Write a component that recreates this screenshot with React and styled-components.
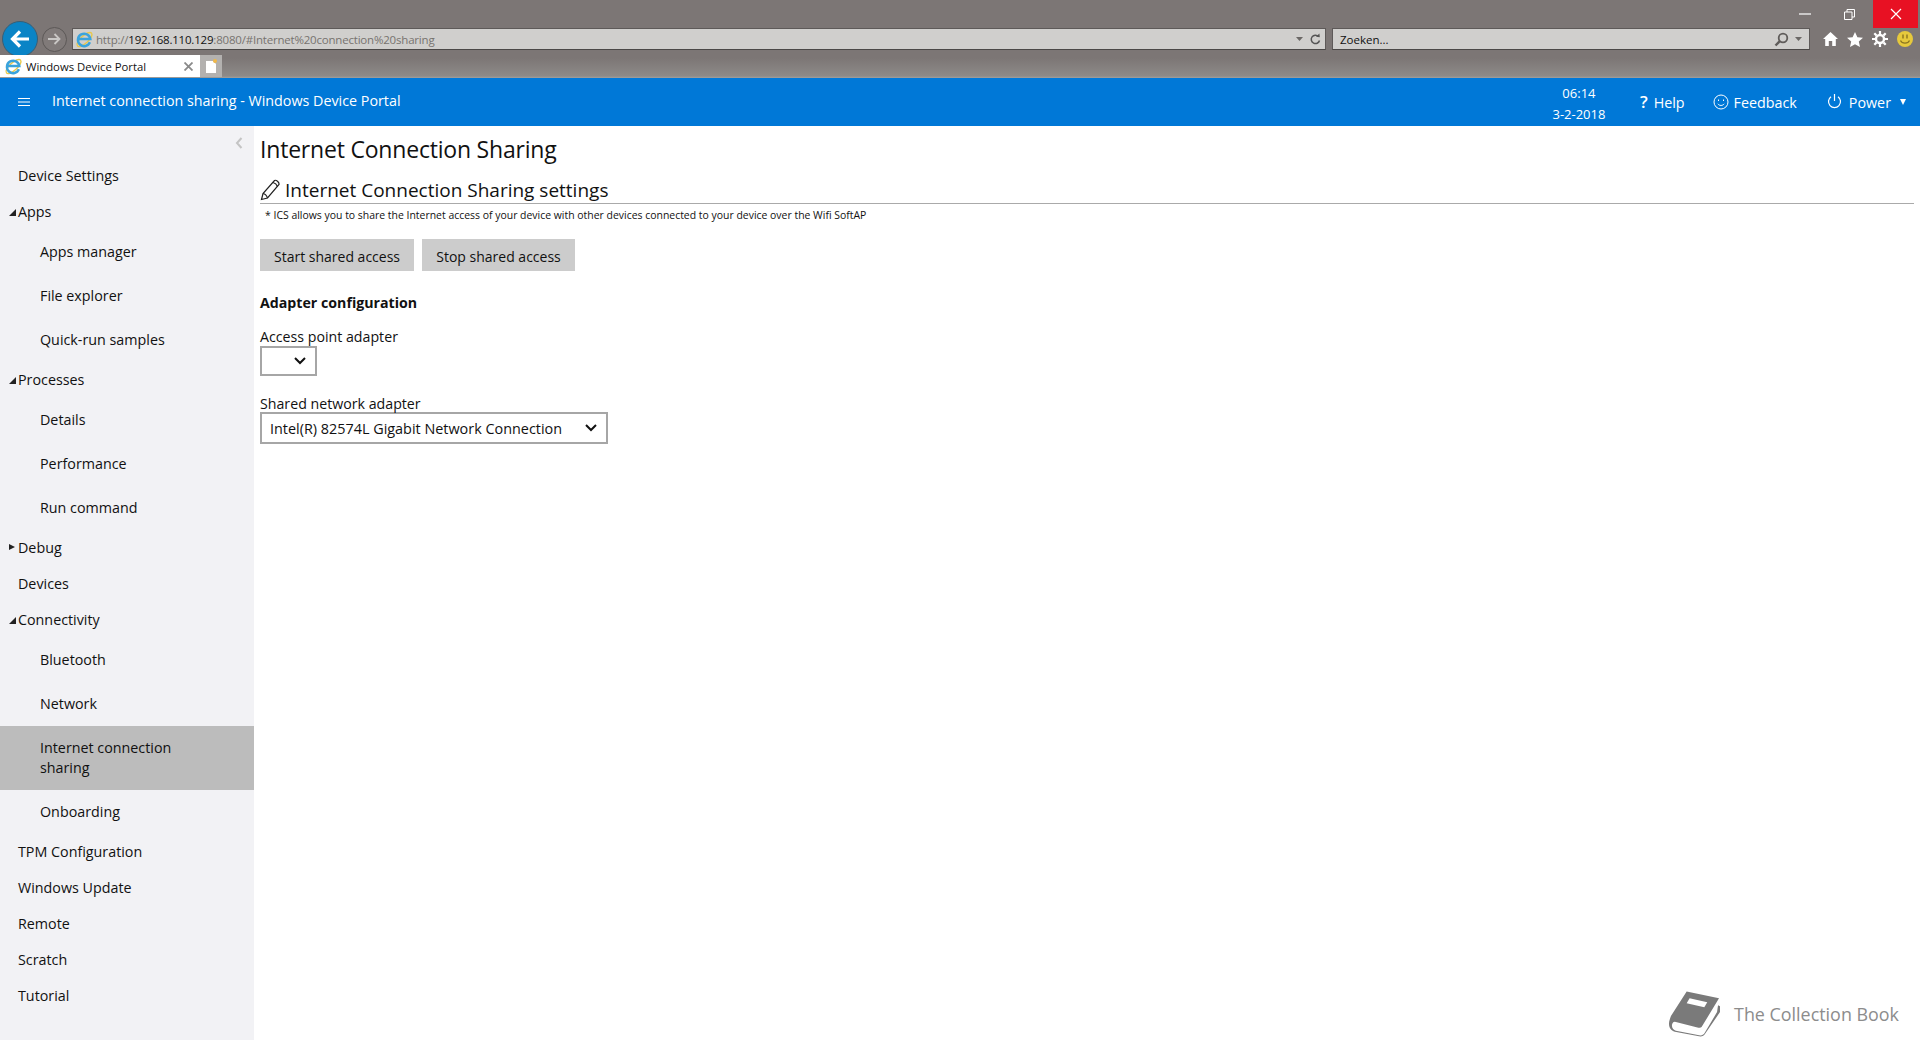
import React from "react";
import styled, { createGlobalStyle } from "styled-components";

const GlobalStyle = createGlobalStyle`
  html, body {
    margin: 0;
    height: 100%;
    overflow: hidden;
    background: #fff;
    font-family: "Open Sans", "Noto Sans", sans-serif;
    color: #111;
  }
  * { box-sizing: border-box; }
`;

const Page = styled.div`
  width: 1920px;
  height: 1040px;
  display: flex;
  flex-direction: column;
  position: relative;
  overflow: hidden;
`;

// 브라우저 크롬
const Chrome = styled.div`
  height: 78px;
  flex: none;
  background: linear-gradient(#7c7675 0, #7c7675 58px, #8d8a88 76px, #a19f9d 78px);
`;

const WindowRow = styled.div`
  height: 28px;
  display: flex;
  justify-content: flex-end;
`;

const WinButton = styled.div`
  width: ${(props) => props.$w}px;
  height: 28px;
  display: flex;
  align-items: center;
  justify-content: center;
  background: ${(props) => (props.$close ? "#e81123" : "transparent")};
  margin-right: ${(props) => props.$mr || 0}px;
`;

const AddressRow = styled.div`
  height: 22px;
  display: flex;
  align-items: center;
  padding-left: 2px;
`;

const BackButton = styled.div`
  width: 36px;
  height: 36px;
  flex: none;
  border-radius: 50%;
  background: #0a84c6;
  border: 1px solid #3a5e74;
  display: flex;
  align-items: center;
  justify-content: center;
`;

const ForwardButton = styled.div`
  width: 25px;
  height: 25px;
  flex: none;
  margin-left: 4px;
  border-radius: 50%;
  background: #807a79;
  border: 1px solid #5c5857;
  display: flex;
  align-items: center;
  justify-content: center;
`;

const Field = styled.div`
  height: 22px;
  background: #d0cfcd;
  border: 1px solid #5e5a59;
  border-bottom-color: #4b4847;
  display: flex;
  align-items: center;
  font-size: 11.5px;
  color: #111;
  white-space: nowrap;
`;

const AddressField = styled(Field)`
  width: 1254px;
  margin-left: 5px;
  padding: 0 4px 0 2px;
  gap: 2px;
`;

const SearchField = styled(Field)`
  width: 478px;
  margin-left: 6px;
  padding: 0 7px 0 7px;
`;

const Dim = styled.span`
  color: #77736f;
`;

const Url = styled.span`
  flex: 1;
  letter-spacing: -0.2px;
`;

const FieldTools = styled.div`
  margin-left: auto;
  display: flex;
  align-items: center;
  gap: 6px;
`;

const ToolIcons = styled.div`
  display: flex;
  align-items: center;
  margin-left: 13px;
  gap: 9px;
`;

const TabRow = styled.div`
  height: 22px;
  margin-top: 5px;
  display: flex;
`;

const Tab = styled.div`
  width: 200px;
  background: #fff;
  display: flex;
  align-items: center;
  padding-left: 4px;
  gap: 3px;
  font-size: 11.3px;
  white-space: nowrap;
`;

const TabClose = styled.span`
  margin-left: auto;
  margin-right: 7px;
  display: flex;
`;

const NewTab = styled.div`
  width: 22px;
  background: #b3b1af;
  display: flex;
  align-items: center;
  justify-content: center;
`;

const Header = styled.header`
  height: 48px;
  flex: none;
  background: #0078d7;
  color: #fff;
  display: flex;
  align-items: center;
  padding-left: 18px;
  font-size: 14.3px;
`;

const PageTitle = styled.div`
  margin-left: 22px;
  font-size: 14.3px;
  padding-bottom: 4px;
`;

const Clock = styled.div`
  margin-left: auto;
  width: 62px;
  text-align: center;
  font-size: 13px;
  line-height: 21px;
  padding-top: 4px;
`;

const HeaderLink = styled.div`
  display: flex;
  align-items: center;
  gap: ${(props) => props.$gap}px;
  margin-left: ${(props) => props.$ml}px;
  margin-right: ${(props) => props.$mr || 0}px;
`;

const HelpMark = styled.span`
  font-size: 17px;
  font-weight: 600;
  line-height: 20px;
`;

const Caret = styled.span`
  width: 0;
  height: 0;
  margin-left: 2px;
  border-left: 3.5px solid transparent;
  border-right: 3.5px solid transparent;
  border-top: 6px solid #fff;
`;

const PowerSvg = styled.svg`
  margin-bottom: 3px;
`;

const Body = styled.div`
  flex: 1;
  display: flex;
  min-height: 0;
`;

const Sidebar = styled.nav`
  width: 254px;
  flex: none;
  background: #f2f2f5;
  font-size: 14.3px;
  padding-top: 32px;
  position: relative;
`;

const Collapse = styled.div`
  position: absolute;
  top: 11px;
  right: 11px;
  display: flex;
`;

const NavTop = styled.div`
  height: 36px;
  line-height: 36px;
  padding-left: 18px;
  position: relative;
`;

const NavSub = styled.div`
  padding: 12px 40px 12px 40px;
  line-height: 20px;
  background: ${(props) => (props.$active ? "#bcbcbc" : "transparent")};
`;

const Arrow = styled.span`
  position: absolute;
  left: 9px;
  top: ${(props) => (props.$open ? 15 : 14)}px;
  width: 0;
  height: 0;
  ${(props) =>
    props.$open
      ? `border-left: 7px solid transparent; border-bottom: 7px solid #222;`
      : `border-top: 3.5px solid transparent; border-bottom: 3.5px solid transparent; border-left: 6px solid #222;`}
`;

const Main = styled.main`
  flex: 1;
  padding: 0 6px 0 6px;
`;

const Title = styled.h1`
  margin: 0;
  height: 46px;
  line-height: 46px;
  font-size: 23px;
  letter-spacing: -0.2px;
  font-weight: 400;
`;

const SubTitle = styled.h2`
  margin: 0;
  height: 32px;
  display: flex;
  align-items: center;
  gap: 4px;
  font-size: 19px;
  font-weight: 400;
  border-bottom: 1px solid #aaa;
  padding-top: 4px;
`;

const Note = styled.p`
  margin: 0;
  height: 22px;
  line-height: 22px;
  padding-left: 5px;
  font-size: 10.45px;
`;

const Buttons = styled.div`
  display: flex;
  gap: 8px;
  margin-top: 13px;
`;

const Button = styled.button`
  height: 32px;
  width: ${(props) => props.$w}px;
  padding: 2px 0 0;
  border: none;
  background: #cccccc;
  color: #111;
  font: inherit;
  font-size: 14px;
`;

const SectionTitle = styled.h3`
  margin: 21px 0 0;
  line-height: 22px;
  font-size: 14.2px;
  font-weight: 700;
`;

const Label = styled.div`
  line-height: ${(props) => props.$lh}px;
  font-size: 14.2px;
  margin-top: ${(props) => props.$mt}px;
`;

const SelectBox = styled.div`
  width: ${(props) => props.$w}px;
  height: ${(props) => props.$h}px;
  border: 2px solid #a6a6a6;
  background: #fff;
  display: flex;
  align-items: center;
  padding: 0 9px 0 8px;
  font-size: 14.4px;
`;

const Chevron = styled.svg`
  margin-left: auto;
  flex: none;
`;

const Watermark = styled.div`
  position: absolute;
  right: 21px;
  bottom: 3px;
  display: flex;
  align-items: center;
  gap: 14px;
  color: #8c8c8c;
  font-size: 17.9px;
`;

const IeLogo = () => (
  <svg width="19" height="19" viewBox="0 0 19 19">
    <ellipse cx="9.500" cy="9.500" rx="9.500" ry="3.800" transform="rotate(-42 9.500 9.500)" fill="none" stroke="#e8c84a" strokeWidth="1.400" />
    <path d="M14.900 12.300A6.200 6.200 0 1 1 15.300 9H4.200" fill="none" stroke="#3aa3dc" strokeWidth="2.500" />
  </svg>
);

const WinMin = () => (
  <svg width="12" height="2" viewBox="0 0 12 2"><path d="M0 1h12" stroke="#fff" strokeWidth="1.2" /></svg>
);

const WinRestore = () => (
  <svg width="11" height="11" viewBox="0 0 11 11" fill="none" stroke="#fff">
    <path d="M.5 3h7.500v7.500H.5z" />
    <path d="M3 3V.5h7.500V8H8" />
  </svg>
);

const WinClose = () => (
  <svg width="12" height="12" viewBox="0 0 12 12"><path d="M1 1l10 10M11 1L1 11" stroke="#fff" strokeWidth="1.2" /></svg>
);

const SmallArrow = () => (
  <svg width="7" height="4" viewBox="0 0 7 4"><path d="M0 0h7L3.500 4z" fill="#6b6866" /></svg>
);

const Refresh = () => (
  <svg width="12" height="13" viewBox="0 0 12 13" fill="none">
    <path d="M9.500 3.500a4.200 4.200 0 1 0 1 4" stroke="#555" strokeWidth="1.500" />
    <path d="M7 3.800l3.800.4L10.400.5z" fill="#555" />
  </svg>
);

const Magnifier = () => (
  <svg width="15" height="15" viewBox="0 0 15 15" fill="none" stroke="#5f5c5a" strokeWidth="1.800">
    <circle cx="9" cy="6" r="4.300" />
    <path d="M5.800 9.200L1.500 13.500" strokeWidth="2.400" />
  </svg>
);

const ToolbarIcons = () => (
  <ToolIcons>
    <svg width="15" height="14" viewBox="0 0 15 14" fill="#fff">
      <path d="M7.500 0L15 7h-2.200v7H9.200V9H5.800v5H2.200V7H0z" />
    </svg>
    <svg width="16" height="15" viewBox="0 0 16 15" fill="#fff">
      <path d="M8 0l2.400 5.200 5.600.6-4.200 3.800 1.200 5.400L8 12.200 3 15l1.200-5.400L0 5.800l5.600-.6z" />
    </svg>
    <svg width="16" height="16" viewBox="0 0 16 16" fill="none" stroke="#fff">
      <circle cx="8" cy="8" r="4" strokeWidth="2.400" />
      <path d="M8 0v3M8 13v3M0 8h3M13 8h3M2.300 2.300l2.100 2.100M11.600 11.600l2.100 2.100M13.700 2.300l-2.100 2.100M4.400 11.600l-2.100 2.100" strokeWidth="2.200" />
    </svg>
    <svg width="16" height="16" viewBox="0 0 16 16">
      <circle cx="8" cy="8" r="8" fill="#e6c93c" />
      <path d="M6 3.500v4M10 3.500v4" stroke="#8a7420" strokeWidth="1.400" />
      <path d="M3.500 9.500c1.500 3.500 7.500 3.500 9 0" stroke="#8a7420" strokeWidth="1.200" fill="none" />
    </svg>
  </ToolIcons>
);

const Menu = () => (
  <svg width="12" height="10" viewBox="0 0 12 10"><path d="M0 1.500h12M0 5h12M0 8.500h12" stroke="#fff" strokeWidth="1" /></svg>
);

const Smile = () => (
  <svg width="16" height="16" viewBox="0 0 16 16" fill="none" stroke="#fff" strokeWidth="1">
    <circle cx="8" cy="8" r="7" />
    <path d="M4.800 9.800c1.600 2.200 4.800 2.200 6.400 0" />
    <path d="M5.500 5.500v1.500M10.500 5.500v1.500" />
  </svg>
);

const PowerIcon = () => (
  <PowerSvg width="15" height="16" viewBox="0 0 15 16" fill="none" stroke="#fff" strokeWidth="1.200">
    <path d="M7.500 1v7" />
    <path d="M4 3.700a6 6 0 1 0 7 0" />
  </PowerSvg>
);

const Pencil = () => (
  <svg width="21" height="22" viewBox="0 0 21 22" fill="none" stroke="#222" strokeWidth="1.200">
    <path d="M1.500 20.500l1.500-6L14.500 1.500c1.500-1 5 1.800 4.500 4L7.500 19z" />
    <path d="M3 14.500c1.500.2 3.800 2.300 4.500 4.500M13 3.500c2 .5 3.800 2.200 4.500 4" />
  </svg>
);

const ChevronDown = () => (
  <Chevron width="12" height="8" viewBox="0 0 12 8">
    <path d="M1 1l5 5 5-5" fill="none" stroke="#111" strokeWidth="2" />
  </Chevron>
);

const Book = () => (
  <svg width="51" height="46" viewBox="0 0 52 46">
    <path d="M18 0l33 7-17 28c-1 2-2 2-4 2L6 31c-2 0-3 2-3 4 0 3 2 4 4 5l25 5c2 0 3-1 4-2l13-22 1-7 2 1v6L37 43c-1 2-3 3-5 3L6 41c-4-1-6-4-6-8 0-3 1-5 2-8z" fill="#7a7a7a" />
    <path d="M21 7l18 4-3 5-18-4z" fill="#fff" />
  </svg>
);

const navItems = [
  ["top", "Device Settings"],
  ["open", "Apps"],
  ["sub", "Apps manager"],
  ["sub", "File explorer"],
  ["sub", "Quick-run samples"],
  ["open", "Processes"],
  ["sub", "Details"],
  ["sub", "Performance"],
  ["sub", "Run command"],
  ["closed", "Debug"],
  ["top", "Devices"],
  ["open", "Connectivity"],
  ["sub", "Bluetooth"],
  ["sub", "Network"],
  ["active", "Internet connection sharing"],
  ["sub", "Onboarding"],
  ["top", "TPM Configuration"],
  ["top", "Windows Update"],
  ["top", "Remote"],
  ["top", "Scratch"],
  ["top", "Tutorial"],
];

export default function App() {
  return (
    <Page>
      <GlobalStyle />
      <Chrome>
        <WindowRow>
          <WinButton $w={45}><WinMin /></WinButton>
          <WinButton $w={45} $mr={1}><WinRestore /></WinButton>
          <WinButton $w={45} $close $mr={2}><WinClose /></WinButton>
        </WindowRow>
        <AddressRow>
          <BackButton>
            <svg width="20" height="18" viewBox="0 0 20 18" fill="none" stroke="#fff" strokeWidth="3.200">
              <path d="M19 9H3M10 1.500L2.500 9l7.500 7.500" />
            </svg>
          </BackButton>
          <ForwardButton>
            <svg width="13" height="12" viewBox="0 0 13 12" fill="none" stroke="#c9c7c5" strokeWidth="1.800">
              <path d="M0 6h11M6.500 1l5 5-5 5" />
            </svg>
          </ForwardButton>
          <AddressField>
            <IeLogo />
            <Url>
              <Dim>http://</Dim>192.168.110.129<Dim>:8080/#Internet%20connection%20sharing</Dim>
            </Url>
            <FieldTools>
              <SmallArrow />
              <Refresh />
            </FieldTools>
          </AddressField>
          <SearchField>
            Zoeken...
            <FieldTools>
              <Magnifier />
              <SmallArrow />
            </FieldTools>
          </SearchField>
          <ToolbarIcons />
        </AddressRow>
        <TabRow>
          <Tab>
            <IeLogo />
            Windows Device Portal
            <TabClose>
              <svg width="9" height="9" viewBox="0 0 9 9"><path d="M.5.500l8 8M8.500.500l-8 8" stroke="#8a8a8a" strokeWidth="1.800" /></svg>
            </TabClose>
          </Tab>
          <NewTab>
            <svg width="11" height="14" viewBox="0 0 11 14">
              <path d="M0 2h7l3 3v9H0z" fill="#fff" />
              <circle cx="9" cy="2" r="2" fill="#f0b848" />
            </svg>
          </NewTab>
        </TabRow>
      </Chrome>
      <Header>
        <Menu />
        <PageTitle>Internet connection sharing - Windows Device Portal</PageTitle>
        <Clock>
          <div>06:14</div>
          <div>3-2-2018</div>
        </Clock>
        <HeaderLink $ml={30} $gap={6}>
          <HelpMark>?</HelpMark>
          Help
        </HeaderLink>
        <HeaderLink $ml={28} $gap={5}>
          <Smile />
          Feedback
        </HeaderLink>
        <HeaderLink $ml={30} $mr={14} $gap={7}>
          <PowerIcon />
          Power
          <Caret />
        </HeaderLink>
      </Header>
      <Body>
        <Sidebar>
          <Collapse>
            <svg width="8" height="12" viewBox="0 0 8 12"><path d="M6.500 1L2 6l4.500 5" fill="none" stroke="#c4c4c4" strokeWidth="2" /></svg>
          </Collapse>
          {navItems.map(([kind, label]) =>
            kind === "sub" || kind === "active" ? (
              <NavSub key={label} $active={kind === "active"}>{label}</NavSub>
            ) : (
              <NavTop key={label}>
                {kind !== "top" && <Arrow $open={kind === "open"} />}
                {label}
              </NavTop>
            )
          )}
        </Sidebar>
        <Main>
          <Title>Internet Connection Sharing</Title>
          <SubTitle>
            <Pencil />
            Internet Connection Sharing settings
          </SubTitle>
          <Note>* ICS allows you to share the Internet access of your device with other devices connected to your device over the Wifi SoftAP</Note>
          <Buttons>
            <Button $w={154}>Start shared access</Button>
            <Button $w={153}>Stop shared access</Button>
          </Buttons>
          <SectionTitle>Adapter configuration</SectionTitle>
          <Label $mt={14} $lh={18}>Access point adapter</Label>
          <SelectBox $w={57} $h={30}><ChevronDown /></SelectBox>
          <Label $mt={20} $lh={16}>Shared network adapter</Label>
          <SelectBox $w={348} $h={32}>
            Intel(R) 82574L Gigabit Network Connection
            <ChevronDown />
          </SelectBox>
        </Main>
      </Body>
      <Watermark>
        <Book />
        The Collection Book
      </Watermark>
    </Page>
  );
}
